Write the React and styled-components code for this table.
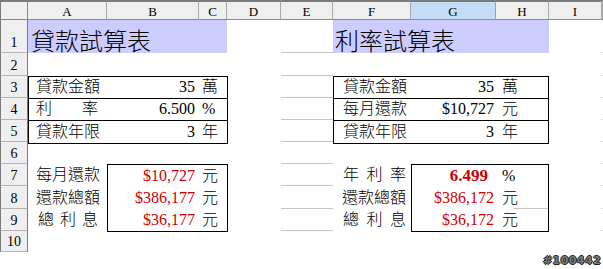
import React from 'react';
import styled, { createGlobalStyle } from 'styled-components';

const GlobalStyle = createGlobalStyle`
  html, body { margin: 0; padding: 0; background: #fff; }
`;

const COLUMNS = [ 'A', 'B', 'C', 'D', 'E', 'F', 'G', 'H', 'I' ];
const ROWS = [ 1, 2, 3, 4, 5, 6, 7, 8, 9, 10 ];

const Sheet = styled.div`
  position: relative;
  width: 603px;
  height: 269px;
  overflow: hidden;
  display: grid;
  grid-template-columns: 28px 79px 92px 28px 54px 52px 78px 85px 53px 53px 1fr;
  grid-template-rows: 20px 33px 23px 22px 22px 22px 22px 22px 23px 22px 21px 1fr;
  font-family: "Liberation Serif", "Noto Sans CJK TC", serif;
  font-size: 16px;
  font-weight: 300;
  color: #000;
`;

const Corner = styled.div`
  grid-column: 1;
  grid-row: 1;
  box-sizing: border-box;
  background: #efefef;
  border-top: 2px solid #7a7a7a;
  border-left: 1px solid #7a7a7a;
  border-right: 1px solid #8a8a8a;
  border-bottom: 1px solid #8a8a8a;
`;

const ColHead = styled.div`
  grid-row: 1;
  box-sizing: border-box;
  display: flex;
  align-items: center;
  justify-content: center;
  padding-top: 1px;
  background: ${ p => p.$active ? '#c4dcf6' : '#efefef' };
  border-top: 2px solid #7a7a7a;
  border-right: 1px solid ${ p => p.$active ? '#7fa6d8' : '#a8a8a8' };
  border-bottom: 1px solid ${ p => p.$active ? '#6f98d0' : '#8a8a8a' };
  font: 13px/1 "Liberation Serif", serif;
`;

const RowHead = styled.div`
  grid-column: 1;
  grid-row: ${ p => p.$row };
  box-sizing: border-box;
  display: flex;
  align-items: flex-end;
  justify-content: center;
  padding-bottom: 2px;
  background: #efefef;
  border-left: 1px solid #7a7a7a;
  border-right: 1px solid #7a7a7a;
  border-bottom: 1px solid #b4b4b4;
  font: 14px/1 "Liberation Serif", serif;
`;

const Title = styled.div`
  grid-row: 2;
  grid-column: ${ p => p.$cols };
  display: flex;
  align-items: flex-end;
  padding: 0 0 1px ${ p => p.$pad }px;
  background: #ccccff;
  font: 300 24px/24px "Noto Sans CJK TC", sans-serif;
`;

const GridLine = styled.div`
  grid-column: ${ p => p.$col };
  grid-row: ${ p => p.$row };
  margin-left: ${ p => p.$inset || 0 }px;
  border-bottom: 1px solid #c4c4c4;
`;

const Box = styled.div`
  grid-column: ${ p => p.$col };
  grid-row: ${ p => p.$row };
  align-self: start;
  position: relative;
  z-index: 1;
  width: ${ p => p.$w }px;
  box-sizing: border-box;
  border: 1px solid #000;
`;

const BoxRow = styled.div`
  display: grid;
  grid-template-columns: ${ p => p.$cols };
  height: 22px;
  box-sizing: border-box;
  border-bottom: ${ p => p.$lined ? '1px solid #000' : 'none' };
  &:last-child { border-bottom: none; }
`;

const Label = styled.div`
  display: flex;
  align-items: flex-end;
  padding: 0 0 1px ${ p => p.$pl }px;
  line-height: 20px;
`;

const Spread = styled.span`
  display: flex;
  justify-content: space-between;
  width: ${ p => p.$w }px;
  margin-left: ${ p => p.$ml || 0 }px;
`;

const Value = styled.div`
  display: flex;
  align-items: flex-end;
  justify-content: flex-end;
  padding: 0 ${ p => p.$pr }px 1px 0;
  line-height: 20px;
  color: ${ p => p.$red ? '#cc0000' : '#000' };
  font-weight: ${ p => p.$bold ? 700 : 300 };
  font-size: ${ p => p.$bold ? 17 : 16 }px;
`;

const Unit = styled.div`
  display: flex;
  align-items: flex-end;
  padding: 0 0 1px ${ p => p.$pl }px;
  line-height: 20px;
`;

const SideLabel = styled(Label)`
  grid-column: ${ p => p.$col };
  grid-row: ${ p => p.$row };
`;

const Stamp = styled.div`
  position: absolute;
  left: 543px;
  top: 255px;
  font: bold 11px/1 "DejaVu Sans", sans-serif;
  letter-spacing: 0.4px;
  color: #7a7a7a;
  text-shadow: 1px 0 #222, -1px 0 #222, 0 1px #222, 0 -1px #222;
`;

const renderLabel = ( label, w, ml ) => Array.isArray( label )
  ? <Spread $w={ w } $ml={ ml }>{ label.map( ( ch, i ) => <span key={ i }>{ ch }</span> ) }</Spread>
  : label;

const leftInput = [
  { label: '貸款金額', value: '35', unit: '萬' },
  { label: [ '利', '率' ], value: '6.500', unit: '%' },
  { label: '貸款年限', value: '3', unit: '年' },
];

const rightInput = [
  { label: '貸款金額', value: '35', unit: '萬' },
  { label: '每月還款', value: '$10,727', unit: '元' },
  { label: '貸款年限', value: '3', unit: '年' },
];

const leftResult = [
  { label: '每月還款', value: '$10,727', unit: '元' },
  { label: '還款總額', value: '$386,177', unit: '元' },
  { label: [ '總', '利', '息' ], value: '$36,177', unit: '元' },
];

const rightResult = [
  { label: [ '年', '利', '率' ], value: '6.499', unit: '%', bold: true },
  { label: '還款總額', value: '$386,172', unit: '元' },
  { label: [ '總', '利', '息' ], value: '$36,172', unit: '元' },
];

const App = () => (
  <>
    <GlobalStyle/>
    <Sheet>
      <Corner/>
      { COLUMNS.map( c => <ColHead key={ c } $active={ c === 'G' }>{ c }</ColHead> ) }
      <ColHead/>
      { ROWS.map( r => <RowHead key={ r } $row={ r + 1 }>{ r }</RowHead> ) }

      <Title $cols='2 / 5' $pad={ 3 }>貸款試算表</Title>
      <Title $cols='7 / 10' $pad={ 2 }>利率試算表</Title>

      { ROWS.slice( 0, 9 ).map( r => <GridLine key={ `e${ r }` } $col={ 6 } $row={ r + 1 }/> ) }
      { ROWS.slice( 0, 9 ).map( r => <GridLine key={ `j${ r }` } $col={ 11 } $row={ r + 1 }/> ) }
      <GridLine $col={ 9 } $row={ 9 } $inset={ 18 }/>

      <Box $col='2 / 5' $row='4 / 7' $w={ 200 }>
        { leftInput.map( ( d, i ) => (
          <BoxRow key={ i } $lined $cols='78px 92px 1fr'>
            <Label $pl={ 7 }>{ renderLabel( d.label, 62 ) }</Label>
            <Value $pr={ 4 }>{ d.value }</Value>
            <Unit $pl={ 3 }>{ d.unit }</Unit>
          </BoxRow>
        ) ) }
      </Box>

      <Box $col='7 / 10' $row='4 / 7' $w={ 216 }>
        { rightInput.map( ( d, i ) => (
          <BoxRow key={ i } $lined $cols='77px 85px 1fr'>
            <Label $pl={ 9 }>{ d.label }</Label>
            <Value $pr={ 2 }>{ d.value }</Value>
            <Unit $pl={ 6 }>{ d.unit }</Unit>
          </BoxRow>
        ) ) }
      </Box>

      { leftResult.map( ( d, i ) => (
        <SideLabel key={ i } $col={ 2 } $row={ i + 8 } $pl={ 8 }>{ renderLabel( d.label, 60, 2 ) }</SideLabel>
      ) ) }
      <Box $col='3 / 5' $row='8 / 11' $w={ 121 }>
        { leftResult.map( ( d, i ) => (
          <BoxRow key={ i } $cols='91px 1fr'>
            <Value $red $pr={ 4 }>{ d.value }</Value>
            <Unit $pl={ 3 }>{ d.unit }</Unit>
          </BoxRow>
        ) ) }
      </Box>

      { rightResult.map( ( d, i ) => (
        <SideLabel key={ i } $col={ 7 } $row={ i + 8 } $pl={ 9 }>{ renderLabel( d.label, 63, 1 ) }</SideLabel>
      ) ) }
      <Box $col='8 / 11' $row='8 / 11' $w={ 138 }>
        { rightResult.map( ( d, i ) => (
          <BoxRow key={ i } $cols='84px 1fr'>
            <Value $red $bold={ d.bold } $pr={ d.bold ? 8 : 2 }>{ d.value }</Value>
            <Unit $pl={ 6 }>{ d.unit }</Unit>
          </BoxRow>
        ) ) }
      </Box>

      <Stamp>#100442</Stamp>
    </Sheet>
  </>
);

export default App;
